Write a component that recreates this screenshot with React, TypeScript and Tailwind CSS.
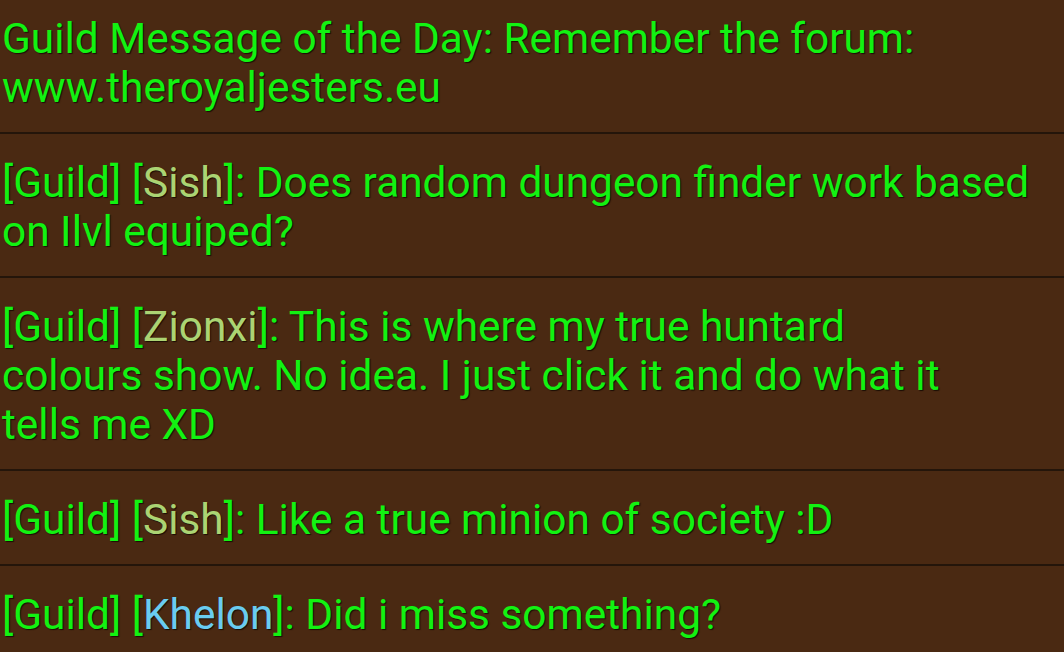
type Msg = {
  name?: string;
  nameColor?: string;
  lines: string[];
  motd?: boolean;
};

const messages: Msg[] = [
  {
    motd: true,
    lines: ["Guild Message of the Day: Remember the forum:", "www.theroyaljesters.eu"],
  },
  {
    name: "Sish",
    nameColor: "text-[#abd473]",
    lines: ["Does random dungeon finder work based", "on Ilvl equiped?"],
  },
  {
    name: "Zionxi",
    nameColor: "text-[#abd473]",
    lines: [
      "This is where my true huntard",
      "colours show. No idea. I just click it and do what it",
      "tells me XD",
    ],
  },
  {
    name: "Sish",
    nameColor: "text-[#abd473]",
    lines: ["Like a true minion of society :D"],
  },
  {
    name: "Khelon",
    nameColor: "text-[#69ccf0]",
    lines: ["Did i miss something?"],
  },
];

const Row = ({ msg, first }: { msg: Msg; first: boolean }) => {
  return (
    <div
      className={`border-b-2 border-[#24150a] px-[2px] pb-[20px] ${
        first ? "pt-[14px]" : "pt-[24px]"
      }`}
    >
      {msg.lines.map((line, i) => (
        <div key={i} className="whitespace-nowrap">
          {i === 0 && !msg.motd && (
            <>
              [Guild] [<span className={msg.nameColor}>{msg.name}</span>]:{" "}
            </>
          )}
          {line}
        </div>
      ))}
    </div>
  );
};

export default function App() {
  return (
    <div
      className="h-[652px] w-[1064px] overflow-hidden bg-[#4a2912] text-[42.4px] leading-[49px] text-[#12f212] [text-shadow:1px_1px_1px_#1a0d04]"
      style={{ fontFamily: "Roboto, 'Liberation Sans', sans-serif" }}
    >
      {messages.map((m, i) => (
        <Row key={i} msg={m} first={i === 0} />
      ))}
    </div>
  );
}
